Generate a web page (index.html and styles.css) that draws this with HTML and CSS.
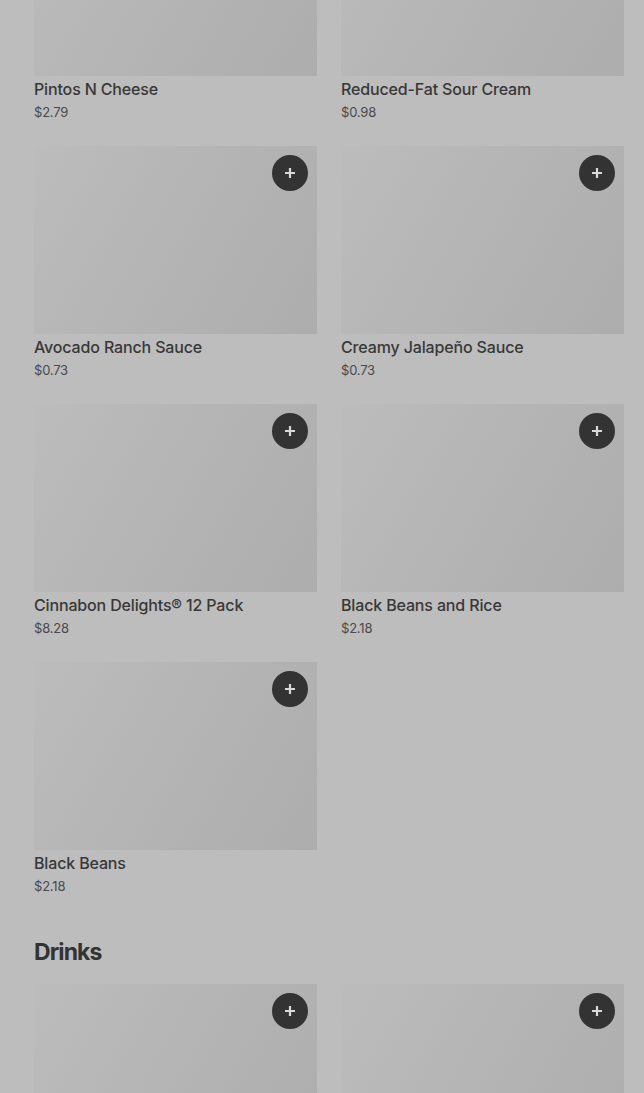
FILE: index.html
```html
<!DOCTYPE html>
<html lang="en">
<head>
  <meta charset="UTF-8" />
  <meta name="viewport" content="width=device-width, initial-scale=1.0" />
  <title>Menu</title>
  <link rel="stylesheet" href="styles.css">
</head>
<body>
  <div class="menu">
    <section class="section first">
      <div class="grid">
        <div class="item">
          <div class="thumb"></div>
          <div class="name">Pintos N Cheese</div>
          <div class="price">$2.79</div>
        </div>
        <div class="item">
          <div class="thumb"></div>
          <div class="name">Reduced-Fat Sour Cream</div>
          <div class="price">$0.98</div>
        </div>
        <div class="item">
          <div class="thumb">
            <button class="add" aria-label="Add"><svg viewBox="0 0 12 12"><path d="M6 1v10M1 6h10"/></svg></button>
          </div>
          <div class="name">Avocado Ranch Sauce</div>
          <div class="price">$0.73</div>
        </div>
        <div class="item">
          <div class="thumb">
            <button class="add" aria-label="Add"><svg viewBox="0 0 12 12"><path d="M6 1v10M1 6h10"/></svg></button>
          </div>
          <div class="name">Creamy Jalapeño Sauce</div>
          <div class="price">$0.73</div>
        </div>
        <div class="item">
          <div class="thumb">
            <button class="add" aria-label="Add"><svg viewBox="0 0 12 12"><path d="M6 1v10M1 6h10"/></svg></button>
          </div>
          <div class="name">Cinnabon Delights® 12 Pack</div>
          <div class="price">$8.28</div>
        </div>
        <div class="item">
          <div class="thumb">
            <button class="add" aria-label="Add"><svg viewBox="0 0 12 12"><path d="M6 1v10M1 6h10"/></svg></button>
          </div>
          <div class="name">Black Beans and Rice</div>
          <div class="price">$2.18</div>
        </div>
        <div class="item">
          <div class="thumb">
            <button class="add" aria-label="Add"><svg viewBox="0 0 12 12"><path d="M6 1v10M1 6h10"/></svg></button>
          </div>
          <div class="name">Black Beans</div>
          <div class="price">$2.18</div>
        </div>
      </div>
    </section>

    <section class="section">
      <h2>Drinks</h2>
      <div class="grid">
        <div class="item">
          <div class="thumb">
            <button class="add" aria-label="Add"><svg viewBox="0 0 12 12"><path d="M6 1v10M1 6h10"/></svg></button>
          </div>
        </div>
        <div class="item">
          <div class="thumb">
            <button class="add" aria-label="Add"><svg viewBox="0 0 12 12"><path d="M6 1v10M1 6h10"/></svg></button>
          </div>
        </div>
      </div>
    </section>
  </div>
</body>
</html>
```

FILE: styles.css
```css
body {
  margin: 0;
  background-color: #bdbdbd;
  font-family: Inter, "Liberation Sans", sans-serif;
  color: #363636;
  height: 1093px;
  overflow: hidden;
}

.menu {
  padding: 0 20px 0 34px;
}

.section.first {
  margin-top: -112px;
}

.grid {
  display: grid;
  grid-template-columns: 283px 283px;
  column-gap: 24px;
  row-gap: 24px;
}

.item {
  display: flex;
  flex-direction: column;
}

.thumb {
  position: relative;
  height: 188px;
  background: linear-gradient(120deg, #bcbcbc 0%, #b5b5b5 45%, #adadad 100%);
}

.add {
  position: absolute;
  top: 9px;
  right: 9px;
  width: 36px;
  height: 36px;
  border: none;
  border-radius: 50%;
  background-color: #333333;
  padding: 0;
  display: flex;
  align-items: center;
  justify-content: center;
  cursor: pointer;
}

.add svg {
  width: 12px;
  height: 12px;
  stroke: #d9d9d9;
  stroke-width: 2.2;
  fill: none;
}

.name {
  margin-top: 3px;
  font-size: 16px;
  font-weight: 500;
  line-height: 20px;
  letter-spacing: -0.15px;
  color: #383838;
}

.price {
  margin-top: 3px;
  font-size: 13px;
  line-height: 20px;
  letter-spacing: -0.2px;
  color: #4a4a4a;
}

h2 {
  margin: 42px 0 18px;
  font-size: 23px;
  font-weight: 700;
  line-height: 28px;
  letter-spacing: -0.9px;
  color: #333333;
}
```
